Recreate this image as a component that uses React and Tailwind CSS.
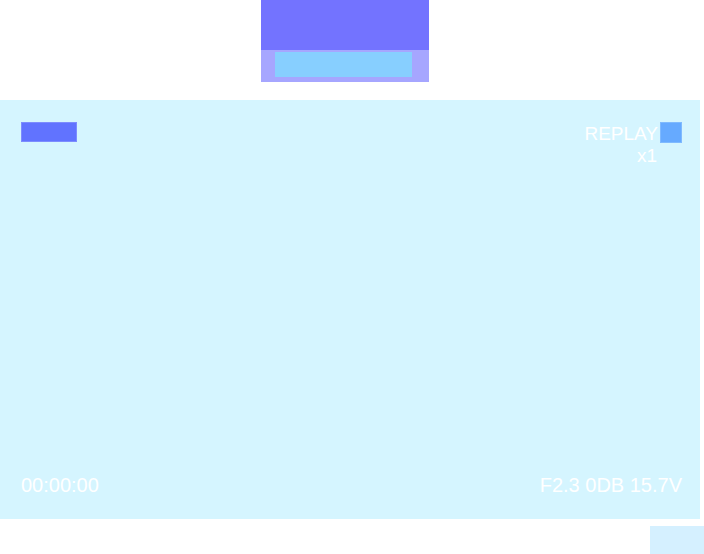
import React from 'react';

const App = () => {
  return (
    <div className="w-[704px] h-[554px] bg-white overflow-hidden" style={{ fontFamily: '"Liberation Sans", Arial, sans-serif' }}>
      {/* top header block */}
      <div className="ml-[261px] w-[168px]">
        <div className="h-[50px] bg-[#7373ff]" />
        <div className="h-[32px] bg-[#a6a6ff] pt-[2px] pl-[14px]">
          <div className="w-[137px] h-[25px] bg-[#87cfff]" />
        </div>
      </div>

      {/* viewer panel */}
      <div className="mt-[18px] w-[700px] h-[419px] bg-[#d5f5ff] flex flex-col justify-between pl-[21px] pr-[18px] pt-[22px] pb-[19px]">
        <div className="flex justify-between items-start">
          <div className="w-[56px] h-[20px] bg-[#6173ff] border border-[#7d8cff]" />
          <div className="flex flex-col items-end">
            <div className="flex items-start">
              <span className="-mt-[2px] text-[19px] text-white">REPLAY</span>
              <div className="ml-[2px] w-[22px] h-[21px] bg-[#66aaff] border border-[#7fbaff]" />
            </div>
            <span className="mr-[25px] -mt-[7px] text-[19px] text-white">x1</span>
          </div>
        </div>
        <div className="flex justify-between items-end text-[20px] text-white">
          <span>00:00:00</span>
          <span>F2.3 0DB 15.7V</span>
        </div>
      </div>

      <div className="mt-[7px] ml-[650px] w-[54px] h-[28px] bg-[#d5f0ff]" />
    </div>
  );
};

export default App;
